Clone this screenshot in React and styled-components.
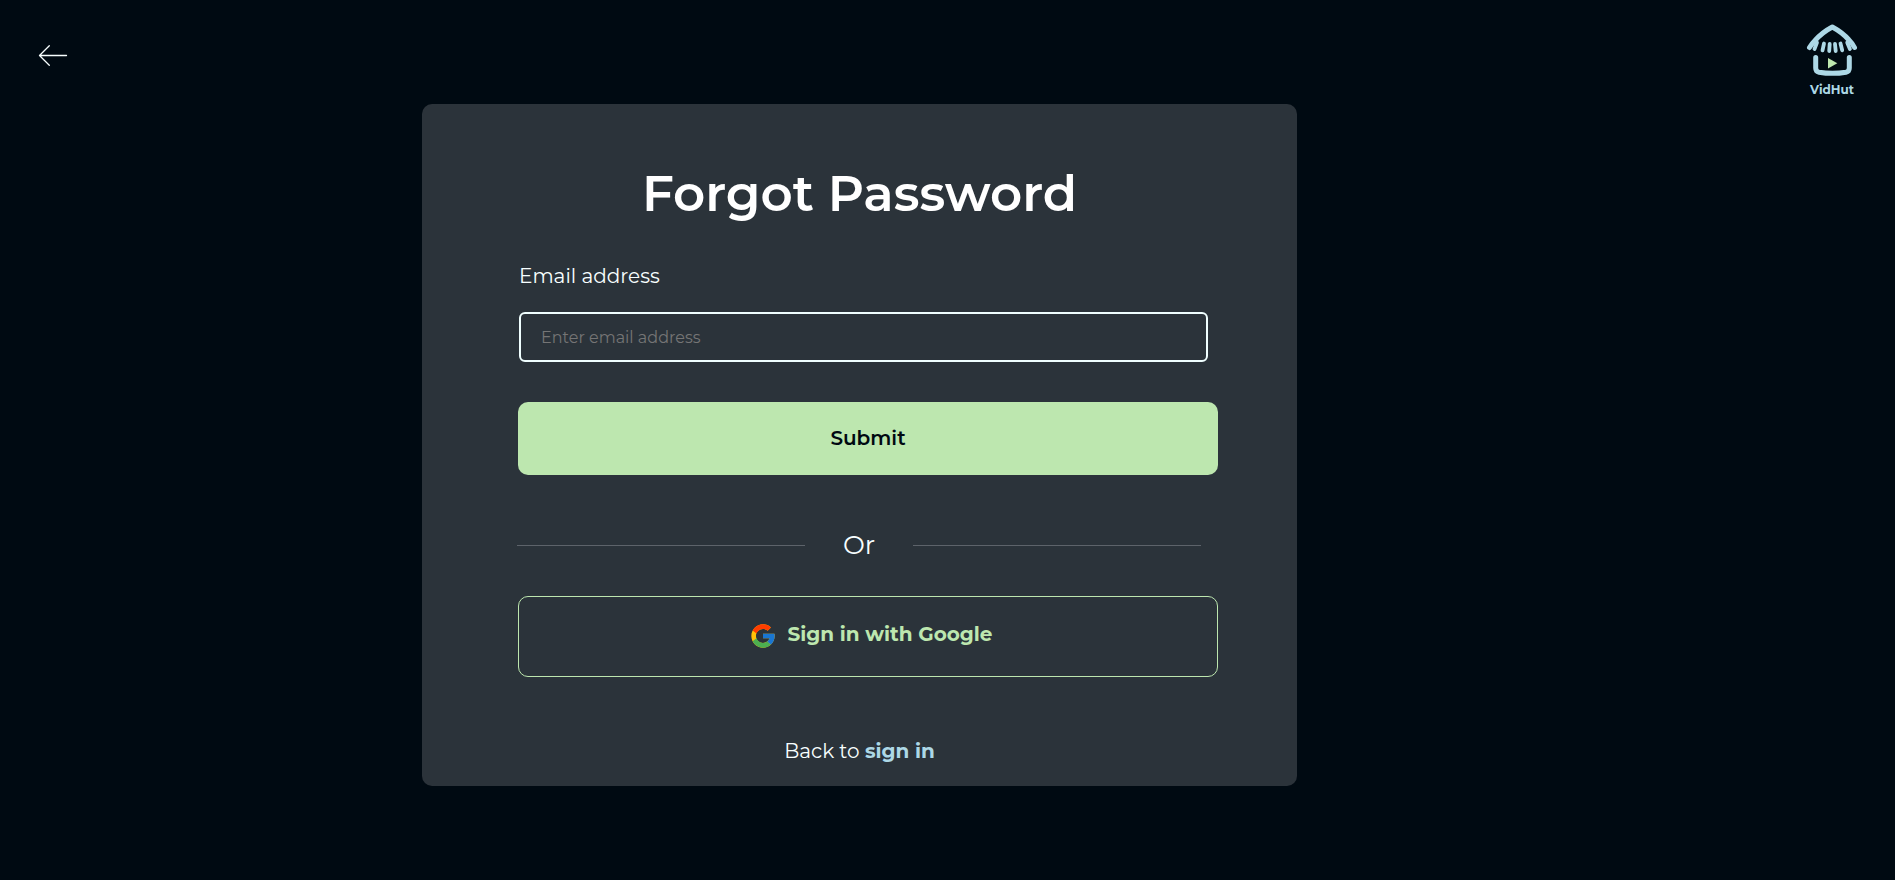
import React from "react";
import styled, { createGlobalStyle } from "styled-components";

const GlobalStyle = createGlobalStyle`
  * { box-sizing: border-box; }
  body {
    margin: 0;
    background: #000a12;
    color: #f8ffff;
    font-family: Montserrat, Inter, "Open Sans", sans-serif;
    font-size: 20px;
    line-height: 24px;
  }
`;

const Page = styled.div`
  display: grid;
  grid-template-columns: 422fr 875fr 598fr;
  align-items: start;
  min-height: 100vh;
  padding-bottom: 40px;
`;

const BackButton = styled.button`
  justify-self: start;
  display: flex;
  margin: 40px 0 0 36px;
  padding: 0;
  border: 0;
  background: none;
  color: #f8ffff;
  cursor: pointer;
`;

const Brand = styled.a`
  justify-self: end;
  display: flex;
  flex-direction: column;
  align-items: center;
  margin: 23px 37px 0 0;
  color: #add8e6;
  font-size: 12px;
  font-weight: 700;
  line-height: 16px;
  text-decoration: none;
  gap: 5px;
`;

const Card = styled.main`
  margin-top: 104px;
  padding: 60px 79px 23px 96px;
  border-radius: 10px;
  background: #2b333a;
`;

const Title = styled.h1`
  margin: 0 17px 40px 0;
  color: #ffffff;
  font-size: 50px;
  font-weight: 600;
  line-height: 60px;
  text-align: center;
`;

const Form = styled.form`
  display: flex;
  flex-direction: column;
`;

const Label = styled.label`
  margin: 0 1px 24px;
`;

const Input = styled.input`
  height: 50px;
  margin: 0 10px 40px 1px;
  padding: 0 20px;
  border: 2px solid #f0ffff;
  border-radius: 6px;
  outline: 0;
  background: transparent;
  color: #f8ffff;
  font: inherit;
  font-size: 16px;
  &::placeholder { color: #757575; opacity: 1; }
`;

const Button = styled.button`
  width: 100%;
  height: 73px;
  padding: 0 0 2px;
  border: 0;
  border-radius: 10px;
  background: #bde7af;
  color: #000911;
  font: inherit;
  font-weight: 600;
  text-align: center;
  cursor: pointer;
`;

const GoogleButton = styled(Button)`
  height: 81px;
  padding: 0 0 2px 5px;
  border: 1px solid #bde7af;
  background: transparent;
  color: #bde7af;
  font-weight: 700;

  svg {
    margin-right: 11px;
    vertical-align: middle;
  }
`;

const Divider = styled.div`
  display: flex;
  align-items: center;
  gap: 38px;
  margin: 54px 17px 35px -1px;
  font-size: 26px;
  line-height: 32px;
  &::before, &::after {
    content: "";
    flex: 1;
    height: 1px;
    background: #5d636a;
  }
`;

const Footer = styled.p`
  margin: 62px 17px 0 0;
  text-align: center;
`;

const SignInLink = styled.a`
  color: #add8e6;
  font-weight: 700;
  text-decoration: none;
`;

const ArrowIcon = () => (
  <svg width="34" height="32" viewBox="0 0 34 32" fill="none" stroke="currentColor" strokeWidth="1.3" strokeLinecap="round" strokeLinejoin="round" aria-hidden="true">
    <path d="M30.500 15.500H3.500M13.300 5.700L3.500 15.500l9.800 9.800" />
  </svg>
);

const HutIcon = () => (
  <svg width="52" height="54" viewBox="0 0 52 54" fill="none" stroke="#add8e6" strokeLinecap="round" strokeLinejoin="round" aria-hidden="true">
    <path strokeWidth="5" d="M3.500 24.500Q6 20.500 9 17.500Q16 9.500 26.300 4Q36.500 9.500 43 17Q46.500 20.500 48.500 24.500" />
    <path strokeWidth="3.800" d="M11 19.500L8.500 26M18 20.500l-1.500 6.800M23.700 21l-.5 7M29 21l.7 7M34.500 20.500l1.700 6.800M41.200 19.500l2.700 6.500" />
    <path strokeWidth="5" d="M9.700 34.500v10.500Q9.700 48.500 13 49.200Q26.500 51.500 40 49.200Q43.300 48.500 43.300 45V34.500" />
    <path fill="#bde7af" stroke="none" d="M22 35l9.300 5.200l-9.300 5.300z" />
  </svg>
);

const GoogleIcon = () => (
  <svg width="28" height="28" viewBox="0 0 48 48" aria-hidden="true">
    <path fill="#FFC107" d="M43.611 20.083H42V20H24v8h11.303c-1.649 4.657-6.080 8-11.303 8-6.627 0-12-5.373-12-12s5.373-12 12-12c3.059 0 5.842 1.154 7.961 3.039l5.657-5.657C34.046 6.053 29.268 4 24 4 12.955 4 4 12.955 4 24s8.955 20 20 20 20-8.955 20-20c0-1.341-.138-2.650-.389-3.917z" />
    <path fill="#FF3D00" d="M6.306 14.691l6.571 4.819C14.655 15.108 18.961 12 24 12c3.059 0 5.842 1.154 7.961 3.039l5.657-5.657C34.046 6.053 29.268 4 24 4 16.318 4 9.656 8.337 6.306 14.691z" />
    <path fill="#4CAF50" d="M24 44c5.166 0 9.860-1.977 13.409-5.192l-6.190-5.238C29.211 35.091 26.715 36 24 36c-5.202 0-9.619-3.317-11.283-7.946l-6.522 5.025C9.505 39.556 16.227 44 24 44z" />
    <path fill="#1976D2" d="M43.611 20.083H42V20H24v8h11.303c-.792 2.237-2.231 4.166-4.087 5.571l6.193 5.238C36.971 39.205 44 34 44 24c0-1.341-.138-2.650-.389-3.917z" />
  </svg>
);

export default function App() {
  return (
    <>
      <GlobalStyle />
      <Page>
        <BackButton type="button" aria-label="Go back"><ArrowIcon /></BackButton>
        <Card>
          <Title>Forgot Password</Title>
          <Form onSubmit={(e) => e.preventDefault()}>
            <Label htmlFor="email">Email address</Label>
            <Input id="email" type="email" placeholder="Enter email address" />
            <Button type="submit">Submit</Button>
          </Form>
          <Divider>Or</Divider>
          <GoogleButton type="button"><GoogleIcon />Sign in with Google</GoogleButton>
          <Footer>Back to <SignInLink href="#signin">sign in</SignInLink></Footer>
        </Card>
        <Brand href="#home"><HutIcon />VidHut</Brand>
      </Page>
    </>
  );
}
